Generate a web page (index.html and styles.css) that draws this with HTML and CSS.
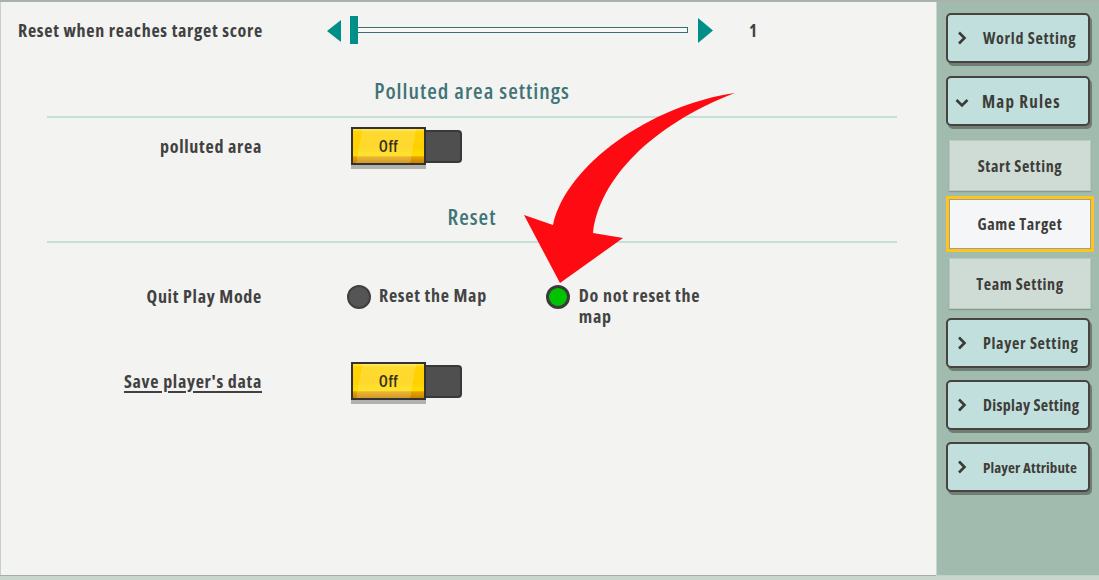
FILE: index.html
```html
<!DOCTYPE html>
<html>
<head>
<meta charset="utf-8">
<link rel="stylesheet" href="styles.css">
</head>
<body>
<div class="app">
  <div class="main">
    <div class="row-slider">
      <div class="slider-label">Reset when reaches target score</div>
      <div class="slider">
        <svg class="arrow-l" width="14" height="22" viewBox="0 0 14 22"><polygon points="14,0 14,22 0,11" fill="#008e88"/></svg>
        <div class="track"><div class="thumb"></div></div>
        <svg class="arrow-r" width="15" height="25" viewBox="0 0 15 25"><polygon points="0,0 15,12.5 0,25" fill="#008e88"/></svg>
        <div class="value">1</div>
      </div>
    </div>

    <div class="section-head first">Polluted area settings</div>
    <div class="row row-toggle">
      <div class="label">polluted area</div>
      <div class="toggle"><div class="toggle-knob">Off</div><div class="toggle-rest"></div></div>
    </div>

    <div class="section-head second">Reset</div>
    <div class="row row-radio">
      <div class="label">Quit Play Mode</div>
      <div class="radio-group">
        <div class="radio"><span class="dot"></span><span class="radio-text">Reset the Map</span></div>
        <div class="radio selected"><span class="dot"></span><span class="radio-text">Do not reset the map</span></div>
      </div>
    </div>
    <div class="row row-save">
      <div class="label link">Save player's data</div>
      <div class="toggle"><div class="toggle-knob">Off</div><div class="toggle-rest"></div></div>
    </div>

    <svg class="red-arrow" width="936" height="572" viewBox="0 0 936 572">
      <path d="M734,91 C650,103 565,163 552,223 L523,213 L559,281 L622,236 L592,231 C598,178 650,123 734,91 Z" fill="#fd0a12"/>
    </svg>
  </div>

  <div class="sidebar">
    <div class="nav-btn b-world"><svg class="chev" width="10" height="14" viewBox="0 0 10 14"><polyline points="2,1.5 7.5,7 2,12.5" fill="none" stroke="#3b3a36" stroke-width="2.6"/></svg><span>World Setting</span></div>
    <div class="nav-btn b-map"><svg class="chev down" width="14" height="10" viewBox="0 0 14 10"><polyline points="1.5,2 7,7.5 12.5,2" fill="none" stroke="#3b3a36" stroke-width="2.6"/></svg><span class="wide">Map Rules</span></div>
    <div class="sub-btn s-start">Start Setting</div>
    <div class="sub-btn active">Game Target</div>
    <div class="sub-btn s-team">Team Setting</div>
    <div class="nav-btn b-player"><svg class="chev" width="10" height="14" viewBox="0 0 10 14"><polyline points="2,1.5 7.5,7 2,12.5" fill="none" stroke="#3b3a36" stroke-width="2.6"/></svg><span>Player Setting</span></div>
    <div class="nav-btn b-display"><svg class="chev" width="10" height="14" viewBox="0 0 10 14"><polyline points="2,1.5 7.5,7 2,12.5" fill="none" stroke="#3b3a36" stroke-width="2.6"/></svg><span class="narrow">Display Setting</span></div>
    <div class="nav-btn b-attr"><svg class="chev" width="10" height="14" viewBox="0 0 10 14"><polyline points="2,1.5 7.5,7 2,12.5" fill="none" stroke="#3b3a36" stroke-width="2.6"/></svg><span class="narrower">Player Attribute</span></div>
  </div>
</div>
</body>
</html>
```
FILE: styles.css
```css
html, body {
  margin: 0;
  padding: 0;
}
body {
  background: #c8d6ce;
  font-family: "Open Sans", "DejaVu Sans", sans-serif;
  font-stretch: 75%;
  font-weight: 700;
  color: #414141;
  width: 1099px;
  height: 580px;
  overflow: hidden;
}
.app {
  display: flex;
  height: 573px;
  border-top: 2px solid #a9b2ad;
}
.main {
  position: relative;
  width: 935px;
  background: #f3f3f1;
  border-left: 1px solid #c9cfcc;
  box-shadow: 0 1px 0 #a4aea8;
}
.row-slider {
  height: 56px;
  display: flex;
  align-items: center;
  padding-left: 17px;
}
.slider-label {
  width: 309px;
  font-size: 18px;
  letter-spacing: 0.7px;
}
.slider {
  display: flex;
  align-items: center;
}
.arrow-l { display: block; margin-top: 1px; }
.track {
  position: relative;
  margin-left: 9px;
  width: 336px;
  height: 4px;
  border: 1px solid #3b6e70;
  background: #f7f7f5;
}
.thumb {
  position: absolute;
  left: -1px;
  top: -12px;
  width: 8px;
  height: 28px;
  background: #008e88;
}
.arrow-r { display: block; margin-left: 10px; }
.value {
  margin-left: 36px;
  font-size: 17px;
}
.section-head {
  margin: 0 39px 0 46px;
  text-align: center;
  font-size: 22px;
  line-height: 26px;
  letter-spacing: 1px;
  color: #407477;
  font-weight: 600;
  border-bottom: 2px solid #c7e0d7;
}
.section-head.first {
  padding-top: 19px;
  padding-bottom: 13px;
}
.section-head.second {
  padding-top: 29px;
  padding-bottom: 12px;
}
.row {
  display: flex;
}
.label {
  width: 261px;
  text-align: right;
  font-size: 18px;
  letter-spacing: 0.7px;
}
.row-toggle {
  height: 56px;
  align-items: center;
}
.row-toggle .toggle, .row-save .toggle {
  margin-left: 89px;
}
.toggle {
  display: flex;
  align-items: center;
}
.toggle-knob {
  width: 71px;
  height: 34px;
  border: 2px solid #333230;
  background: linear-gradient(100deg, transparent 0 12%, rgba(255,255,255,0.18) 12% 82%, transparent 82%),
              linear-gradient(to bottom, #ffe44c 0, #ffd200 3px, #ffd000 55%, #ffdd00 78%, #e8a400 82%, #c98300 100%);
  box-shadow: 0 4px 0 #b1b1ae;
  text-align: center;
  line-height: 34px;
  font-size: 16px;
  letter-spacing: 0.5px;
  color: #35301f;
  font-weight: 600;
}
.toggle-rest {
  width: 34px;
  height: 29px;
  background: #4f4f4f;
  border: 2px solid #383838;
  border-left: none;
  border-radius: 0 4px 4px 0;
}
.row-radio {
  padding-top: 42px;
  align-items: flex-start;
}
.row-radio .label {
  line-height: 22px;
}
.radio-group {
  display: flex;
  margin-left: 85px;
}
.radio {
  display: flex;
  align-items: flex-start;
  font-size: 18px;
  letter-spacing: 0.7px;
  line-height: 21px;
  color: #444;
}
.radio + .radio {
  margin-left: 59px;
}
.dot {
  flex: none;
  width: 20px;
  height: 20px;
  border-radius: 50%;
  background: #555;
  border: 2px solid #404040;
  margin-right: 8px;
}
.radio.selected .dot {
  width: 18px;
  height: 18px;
  border: 3px solid #3b3b3b;
  background: #00c300;
  margin-right: 9px;
}
.radio.selected .radio-text {
  width: 130px;
}
.row-save {
  margin-top: 35px;
  align-items: center;
}
.link {
  text-decoration: underline;
  text-underline-offset: 3px;
  text-decoration-thickness: 1.5px;
}
.red-arrow {
  position: absolute;
  left: 0;
  top: 0;
  pointer-events: none;
}

/* sidebar */
.sidebar {
  flex: 1;
  margin-left: 1px;
  background: #a1bcae;
  display: flex;
  flex-direction: column;
  padding-top: 11px;
  box-shadow: 0 1px 0 #c0d0c8;
}
.nav-btn {
  box-sizing: border-box;
  margin-left: 9px;
  width: 144px;
  height: 50px;
  background: #c1e0dd;
  border: 2px solid #47433f;
  border-radius: 5px;
  box-shadow: 2px 3px 0 #6f7d74;
  display: flex;
  align-items: center;
  font-size: 16px;
  letter-spacing: 0.7px;
  color: #3e3d39;
}
.nav-btn .chev {
  display: block;
  margin-left: 9px;
  margin-right: 16px;
  flex: none;
}
.nav-btn .chev.down {
  margin-left: 7px;
  margin-right: 13px;
  margin-top: 3px;
}
.wide { font-size: 17px; letter-spacing: 1.2px; }
.narrow { font-size: 16px; letter-spacing: 0.3px; }
.narrower { font-size: 15px; letter-spacing: 0.1px; }
.b-map { margin-top: 13px; }
.b-player { margin-top: 9px; }
.b-display, .b-attr { margin-top: 12px; }
.sub-btn {
  box-sizing: border-box;
  margin-left: 12px;
  width: 142px;
  height: 51px;
  background: #cfdcd6;
  border: 1px solid #bac9c2;
  box-shadow: 0 1px 1px rgba(80,100,90,0.35);
  display: flex;
  align-items: center;
  justify-content: center;
  font-size: 16px;
  letter-spacing: 0.6px;
  color: #3e3d39;
}
.s-start { margin-top: 14px; }
.sub-btn.active {
  margin-top: 5px;
  margin-left: 9px;
  width: 148px;
  height: 56px;
  background: #f5f6f8;
  border: 3px solid #ffc41c;
  box-shadow: inset 0 0 0 1px #9aa09d;
}
.s-team { margin-top: 6px; }
```
